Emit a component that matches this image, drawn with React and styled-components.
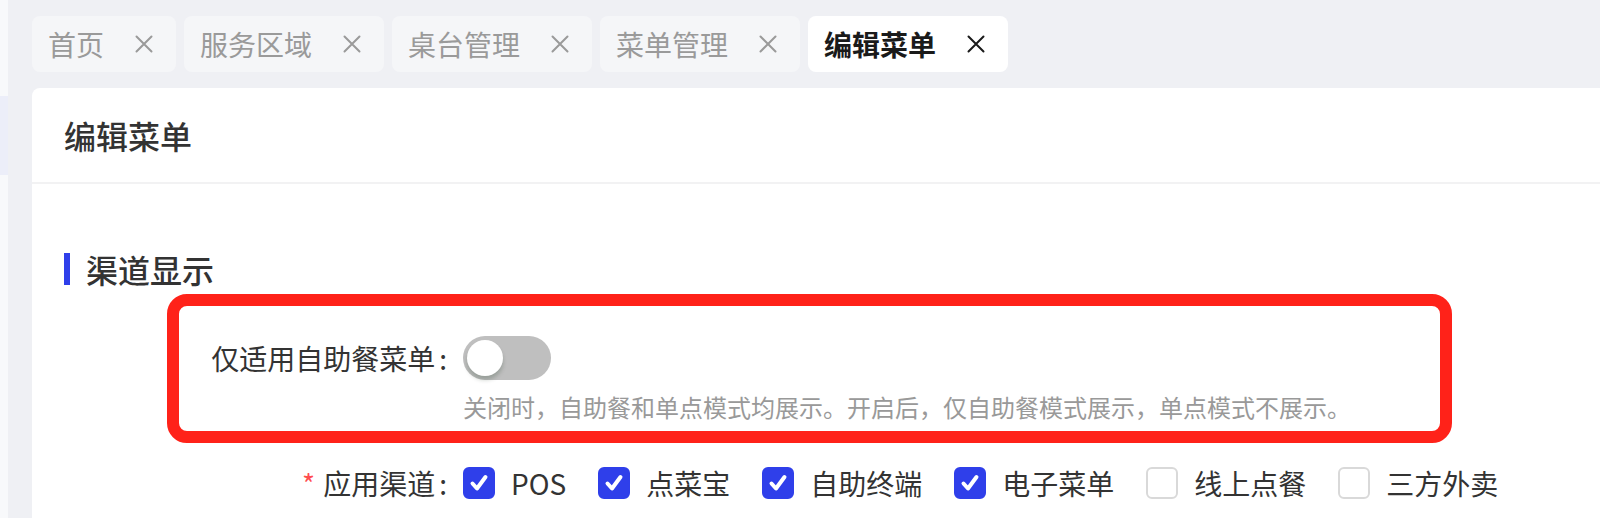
import React from "react";
import styled, { createGlobalStyle } from "styled-components";

const Global = createGlobalStyle`
  html, body { margin: 0; padding: 0; }
  body {
    font-family: "Noto Sans CJK SC", "Noto Sans", sans-serif;
    background: #ffffff;
    overflow: hidden;
  }
  * { box-sizing: border-box; }
`;

const Page = styled.div`
  display: flex;
  height: 518px;
`;

const Sidebar = styled.div`
  width: 8px;
  background: #f8f9fb;
  padding-top: 96px;
`;

const SideActive = styled.div`
  height: 79px;
  background: #eceef9;
`;

const Main = styled.div`
  flex: 1;
  display: flex;
  flex-direction: column;
  background: #eff0f4;
  padding-left: 24px;
  min-width: 0;
`;

const TabBar = styled.div`
  display: flex;
  gap: 8px;
  padding: 16px 0;
`;

const Tab = styled.div`
  display: flex;
  align-items: center;
  gap: 28px;
  height: 56px;
  padding: 0 20px 0 16px;
  border-radius: 8px;
  background: ${(p) => (p.$active ? "#ffffff" : "#f5f6f8")};
  color: ${(p) => (p.$active ? "#1a1a1a" : "#9a9a9a")};
  font-size: 28px;
  font-weight: ${(p) => (p.$active ? 700 : 400)};
  line-height: 56px;
  white-space: nowrap;
`;

const CloseIcon = ({ color }) => (
  <svg width="24" height="24" viewBox="0 0 24 24">
    <path d="M4.5 4.5 L19.5 19.5 M19.5 4.5 L4.5 19.5" stroke={color} strokeWidth="2" strokeLinecap="round" fill="none" />
  </svg>
);

const Panel = styled.div`
  flex: 1;
  background: #ffffff;
  border-radius: 8px 0 0 0;
`;

const PanelHeader = styled.div`
  display: flex;
  align-items: center;
  height: 96px;
  padding: 0 32px;
  border-bottom: 2px solid #f2f2f3;
  font-size: 32px;
  font-weight: 500;
  color: #333333;
`;

const PanelBody = styled.div`
  padding: 69px 32px 0;
`;

const SectionTitle = styled.div`
  display: flex;
  align-items: center;
  gap: 16px;
  height: 32px;
  font-size: 32px;
  line-height: 32px;
  font-weight: 500;
  color: #333333;
`;

const Bar = styled.span`
  width: 6px;
  height: 32px;
  background: #2f3fea;
`;

const Form = styled.div`
  margin-top: 9px;
  padding-left: 115px;
`;

const Highlight = styled.div`
  margin-left: -12px;
  width: 1285px;
  border: 12px solid #ff2219;
  border-radius: 20px;
  padding: 30px 0 8px;
`;

const FormItem = styled.div`
  display: grid;
  grid-template-columns: 284px 1fr;
  margin-top: ${(p) => p.$top || 0}px;
`;

const Label = styled.div`
  height: 44px;
  line-height: 44px;
  text-align: right;
  font-size: 28px;
  color: #333333;
  white-space: nowrap;
  &::after {
    content: ":";
    margin: 0 16px 0 4px;
  }
`;

const Required = styled.span`
  color: #ff4d4f;
  margin-right: 8px;
`;

const Control = styled.div`
  display: flex;
  flex-direction: column;
  align-items: flex-start;
`;

const SwitchTrack = styled.div`
  position: relative;
  width: 88px;
  height: 44px;
  border-radius: 22px;
  background: ${(p) => (p.$on ? "#2f3fea" : "#bfbfbf")};
`;

const SwitchKnob = styled.div`
  position: absolute;
  top: 4px;
  left: ${(p) => (p.$on ? 48 : 4)}px;
  width: 36px;
  height: 36px;
  border-radius: 50%;
  background: #ffffff;
  box-shadow: 0 4px 4px rgba(0, 35, 11, 0.2);
`;

const Hint = styled.div`
  margin-top: 11px;
  font-size: 24px;
  line-height: 32px;
  color: #999999;
  white-space: nowrap;
`;

const CheckGroup = styled.div`
  display: flex;
  align-items: center;
  height: 44px;
`;

const CheckItem = styled.label`
  display: flex;
  align-items: center;
  margin-right: 16px;
`;

const Box = styled.span`
  display: flex;
  align-items: center;
  justify-content: center;
  width: 32px;
  height: 32px;
  border-radius: 6px;
  background: ${(p) => (p.$checked ? "#2f3fea" : "#ffffff")};
  border: 2px solid ${(p) => (p.$checked ? "#2f3fea" : "#d9d9d9")};
`;

const CheckText = styled.span`
  padding: 0 16px;
  font-size: 28px;
  line-height: 44px;
  color: #333333;
  white-space: nowrap;
`;

const CheckMark = () => (
  <svg width="32" height="32" viewBox="0 0 32 32" style={{ margin: -2 }}>
    <path d="M9.5 16.5 L14 21.5 L22.5 10" stroke="#ffffff" strokeWidth="4" strokeLinecap="round" strokeLinejoin="round" fill="none" />
  </svg>
);

const tabs = [
  { label: "首页" },
  { label: "服务区域" },
  { label: "桌台管理" },
  { label: "菜单管理" },
  { label: "编辑菜单", active: true },
];

const channels = [
  { label: "POS", checked: true },
  { label: "点菜宝", checked: true },
  { label: "自助终端", checked: true },
  { label: "电子菜单", checked: true },
  { label: "线上点餐", checked: false },
  { label: "三方外卖", checked: false },
];

export default function App() {
  return (
    <>
      <Global />
      <Page>
        <Sidebar>
          <SideActive />
        </Sidebar>
        <Main>
          <TabBar>
            {tabs.map((t) => (
              <Tab key={t.label} $active={t.active}>
                <span>{t.label}</span>
                <CloseIcon color={t.active ? "#1a1a1a" : "#9a9a9a"} />
              </Tab>
            ))}
          </TabBar>
          <Panel>
            <PanelHeader>编辑菜单</PanelHeader>
            <PanelBody>
              <SectionTitle>
                <Bar />
                <span>渠道显示</span>
              </SectionTitle>
              <Form>
                <Highlight>
                  <FormItem>
                    <Label>仅适用自助餐菜单</Label>
                    <Control>
                      <SwitchTrack $on={false}>
                        <SwitchKnob $on={false} />
                      </SwitchTrack>
                      <Hint>关闭时，自助餐和单点模式均展示。开启后，仅自助餐模式展示，单点模式不展示。</Hint>
                    </Control>
                  </FormItem>
                </Highlight>
                <FormItem $top={18}>
                  <Label>
                    <Required>*</Required>应用渠道
                  </Label>
                  <CheckGroup>
                    {channels.map((c) => (
                      <CheckItem key={c.label}>
                        <Box $checked={c.checked}>{c.checked && <CheckMark />}</Box>
                        <CheckText>{c.label}</CheckText>
                      </CheckItem>
                    ))}
                  </CheckGroup>
                </FormItem>
              </Form>
            </PanelBody>
          </Panel>
        </Main>
      </Page>
    </>
  );
}
